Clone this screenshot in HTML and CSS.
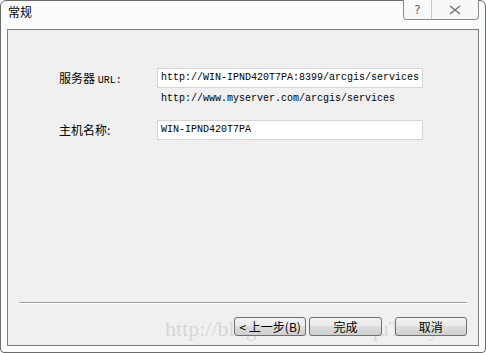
FILE: index.html
```html
<!DOCTYPE html>
<html lang="zh-CN">
<head>
  <meta charset="UTF-8" />
  <title>常规</title>
  <link rel="stylesheet" href="styles.css">
</head>
<body>
  <div class="window">
    <div class="titlebar">
      <span class="title">常规</span>
      <div class="caption-buttons">
        <div class="cap-btn help">?</div>
        <div class="cap-btn close">
          <svg width="14" height="10" viewBox="0 0 14 10"><path d="M2 1 L12 9 M12 1 L2 9" stroke="#777" stroke-width="1.6" fill="none"/></svg>
        </div>
      </div>
    </div>
    <div class="panel">
      <div class="form">
        <label class="label">服务器 <span class="mono">URL:</span></label>
        <div class="field">
          <div class="input">http://WIN-IPND420T7PA:8399/arcgis/services</div>
          <div class="hint">http://www.myserver.com/arcgis/services</div>
        </div>
        <label class="label">主机名称:</label>
        <div class="field">
          <div class="input">WIN-IPND420T7PA</div>
        </div>
      </div>
      <div class="footer">
        <div class="separator"></div>
        <div class="watermark">http://blog.csdn.net/BuquTianya</div>
        <div class="buttons">
          <button class="btn">&lt; 上一步(B)</button>
          <button class="btn">完成</button>
          <button class="btn cancel">取消</button>
        </div>
      </div>
    </div>
  </div>
</body>
</html>
```

FILE: styles.css
```css
body { margin: 0; background: #fff; font-family: "Noto Sans CJK SC", "DejaVu Sans", sans-serif; font-size: 12px; color: #000; }
.window { width: 484px; height: 351px; border: 1px solid #6b6b6b; border-radius: 6px 6px 4px 4px; background: #fbfcfd; display: flex; flex-direction: column; }
.titlebar { height: 28px; display: flex; justify-content: space-between; align-items: flex-start; }
.title { margin: 3px 0 0 7px; font-size: 12px; line-height: 16px; }
.caption-buttons { display: flex; margin-right: 6px; margin-top: -1px; border: 1px solid #8a8a8a; border-top: none; border-radius: 0 0 4px 4px; background: #f7f8fa; height: 19px; }
.cap-btn { display: flex; align-items: center; justify-content: center; height: 19px; color: #666; }
.help { width: 27px; border-right: 1px solid #c8c8c8; font-family: "DejaVu Sans", sans-serif; font-size: 12px; }
.close { width: 46px; }
.panel { flex: 1; margin: 0 6px 6px 6px; border: 1px solid #7d7d7d; background: #f0f0f0; display: flex; flex-direction: column; justify-content: space-between; }
.form { display: grid; grid-template-columns: 98px 266px; padding: 38px 0 0 51px; row-gap: 15px; align-items: start; }
.label { line-height: 20px; }
.mono { font-family: "Liberation Mono", monospace; font-size: 10px; }
.field { display: flex; flex-direction: column; }
.input { height: 18px; border: 1px solid #d5d5d5; background: #fff; font-family: "Liberation Mono", monospace; font-size: 10px; line-height: 18px; padding-left: 3px; white-space: nowrap; overflow: hidden; }
.hint { font-family: "Liberation Mono", monospace; font-size: 10px; line-height: 12px; padding: 5px 0 0 4px; }
.footer { position: relative; padding: 0 11px 9px 11px; }
.separator { height: 1px; background: #a0a0a0; border-bottom: 1px solid #fff; }
.buttons { position: relative; display: flex; margin-top: 13px; padding-left: 215px; gap: 3px; }
.btn { width: 73px; height: 19px; border: 1px solid #707070; border-radius: 3px; background: linear-gradient(#f2f2f2 0%, #ebebeb 45%, #dddddd 50%, #cfcfcf 100%); font-family: "Noto Sans CJK SC", sans-serif; font-size: 12px; line-height: 15px; padding: 0; color: #000; }
.cancel { margin-left: 10px; }
.watermark { position: absolute; left: 157px; bottom: 3px; font-family: "Liberation Serif", serif; font-size: 22px; color: rgba(150, 150, 150, 0.3); white-space: nowrap; pointer-events: none; }
```
